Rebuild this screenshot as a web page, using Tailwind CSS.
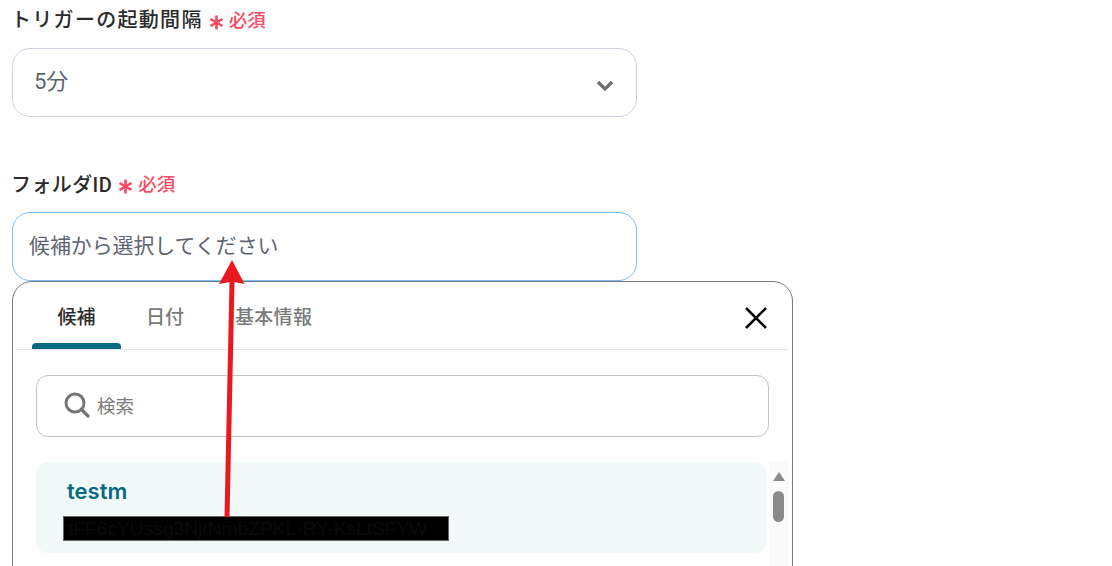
<!DOCTYPE html>
<html lang="ja">
<head>
<meta charset="utf-8">
<script src="https://cdn.jsdelivr.net/npm/@tailwindcss/browser@4"></script>
</head>
<body class="bg-white">
<div class="relative w-[1112px] h-[566px] overflow-hidden pl-3 font-['Roboto','Noto_Sans_CJK_JP',sans-serif]">
  <div class="h-[48px] pt-[7px] -ml-[1px] flex items-start gap-[6px] leading-[26px]">
    <span class="text-[20px] font-medium text-[#2b2b2b] tracking-[1.3px]">トリガーの起動間隔</span>
    <span class="flex items-center text-[18.5px] font-medium text-[#fb4a62] gap-[5px] mt-[1px]">
      <svg width="15" height="15" viewBox="0 0 15 15" class="mt-[3px]"><path d="M7.5 0.5 V14.5 M1.5 4 L13.5 11 M13.5 4 L1.5 11" stroke="#fb4a62" stroke-width="2.6" fill="none"/></svg>
      必須
    </span>
  </div>
  <div class="w-[625px] h-[69px] rounded-[18px] border border-[#ccd2de] flex items-center justify-between pl-[21px] pr-[22px]">
    <span class="text-[22px] text-[#5c6470] pb-[2px]">5分</span>
    <svg width="18" height="11" viewBox="0 0 18 11" class="mt-[5px]"><path d="M2 2 L9 9 L16 2" fill="none" stroke="#6f6f6f" stroke-width="3.2"/></svg>
  </div>
  <div class="h-[95px] pt-[55px] -ml-[1px] flex items-start gap-[6px] leading-[26px]">
    <span class="text-[20px] font-medium text-[#2b2b2b] tracking-[0.4px]">フォルダID</span>
    <span class="flex items-center text-[18.5px] font-medium text-[#fb4a62] gap-[5px]">
      <svg width="15" height="15" viewBox="0 0 15 15" class="mt-[3px]"><path d="M7.5 0.5 V14.5 M1.5 4 L13.5 11 M13.5 4 L1.5 11" stroke="#fb4a62" stroke-width="2.6" fill="none"/></svg>
      必須
    </span>
  </div>
  <div class="w-[625px] h-[69px] rounded-[18px] border border-[#7dbcf5] flex items-center pl-[16px]">
    <span class="text-[20.9px] text-[#5c6470]">候補から選択してください</span>
  </div>
  <div class="w-[781px] h-[320px] rounded-t-[20px] border border-[#7a7a7a] bg-white px-[4px] flex flex-col">
    <div class="h-[68px] border-b border-[#e4e4e4] flex items-end relative">
      <div class="ml-[15px] w-[89px] h-[68px] flex flex-col items-center justify-between">
        <span class="mt-[24px] text-[19px] font-medium text-[#2b2b2b] leading-[26px]">候補</span>
        <div class="w-[89px] h-[6px] rounded-t-[4px] bg-[#0a6a82]"></div>
      </div>
      <span class="ml-[25px] mb-[18px] text-[19px] font-medium text-[#7a7a7a] leading-[26px]">日付</span>
      <span class="ml-[51px] mb-[18px] text-[19px] font-medium text-[#7a7a7a] leading-[26px] tracking-[0.3px]">基本情報</span>
      <svg class="absolute right-[20px] top-[24px]" width="24" height="24" viewBox="0 0 24 24"><path d="M2 2 L22 22 M22 2 L2 22" stroke="#0a0a0a" stroke-width="2.6" fill="none"/></svg>
    </div>
    <div class="ml-[19px] mt-[25px] w-[733px] h-[62px] rounded-[12px] border border-[#c4c4c4] flex items-center pl-[27px] gap-[7px]">
      <svg width="26" height="26" viewBox="0 0 26 26" class="-mt-[2px]"><circle cx="11" cy="11" r="9" fill="none" stroke="#757575" stroke-width="3"/><path d="M17.5 17.5 L24 24" stroke="#757575" stroke-width="3.2" stroke-linecap="round"/></svg>
      <span class="text-[18.5px] text-[#7a7a7a] mt-[3px]">検索</span>
    </div>
    <div class="flex mt-[25px]">
      <div class="ml-[19px] w-[731px] h-[91px] rounded-[12px] bg-[#f1faf9] pl-[27px] pt-[14px] flex flex-col items-start">
        <span class="pl-[4px] text-[22px] leading-[30px] font-semibold text-[#0a6a82] font-['Inter','Liberation_Sans',sans-serif]">testm</span>
        <div class="mt-[10px] w-[386px] h-[25px] bg-black border border-[#666] text-[19.2px] leading-[23px] text-[#0a0a0a] overflow-hidden whitespace-nowrap pl-[4px] font-['Liberation_Sans',sans-serif]">tFF6cYUssg3NjtNmbZPKL-RY-KsLtSFYW</div>
      </div>
      <div class="ml-[2px] w-[19px] bg-[#fafafa] h-[120px] flex flex-col items-center pt-[10px] gap-[10px]">
        <div class="w-0 h-0 border-x-[6.5px] border-x-transparent border-b-[9px] border-b-[#8a8a8a]"></div>
        <div class="w-[11px] h-[31px] rounded-full bg-[#8a8a8a]"></div>
      </div>
    </div>
  </div>
  <svg class="absolute left-0 top-0 pointer-events-none" width="1112" height="566" viewBox="0 0 1112 566">
    <path d="M224.5 517 L229.5 282 L219 284 L232 260 L244.5 284 L234.5 282 L229.5 517 Z" fill="#e8191f"/>
  </svg>
</div>
</body>
</html>
